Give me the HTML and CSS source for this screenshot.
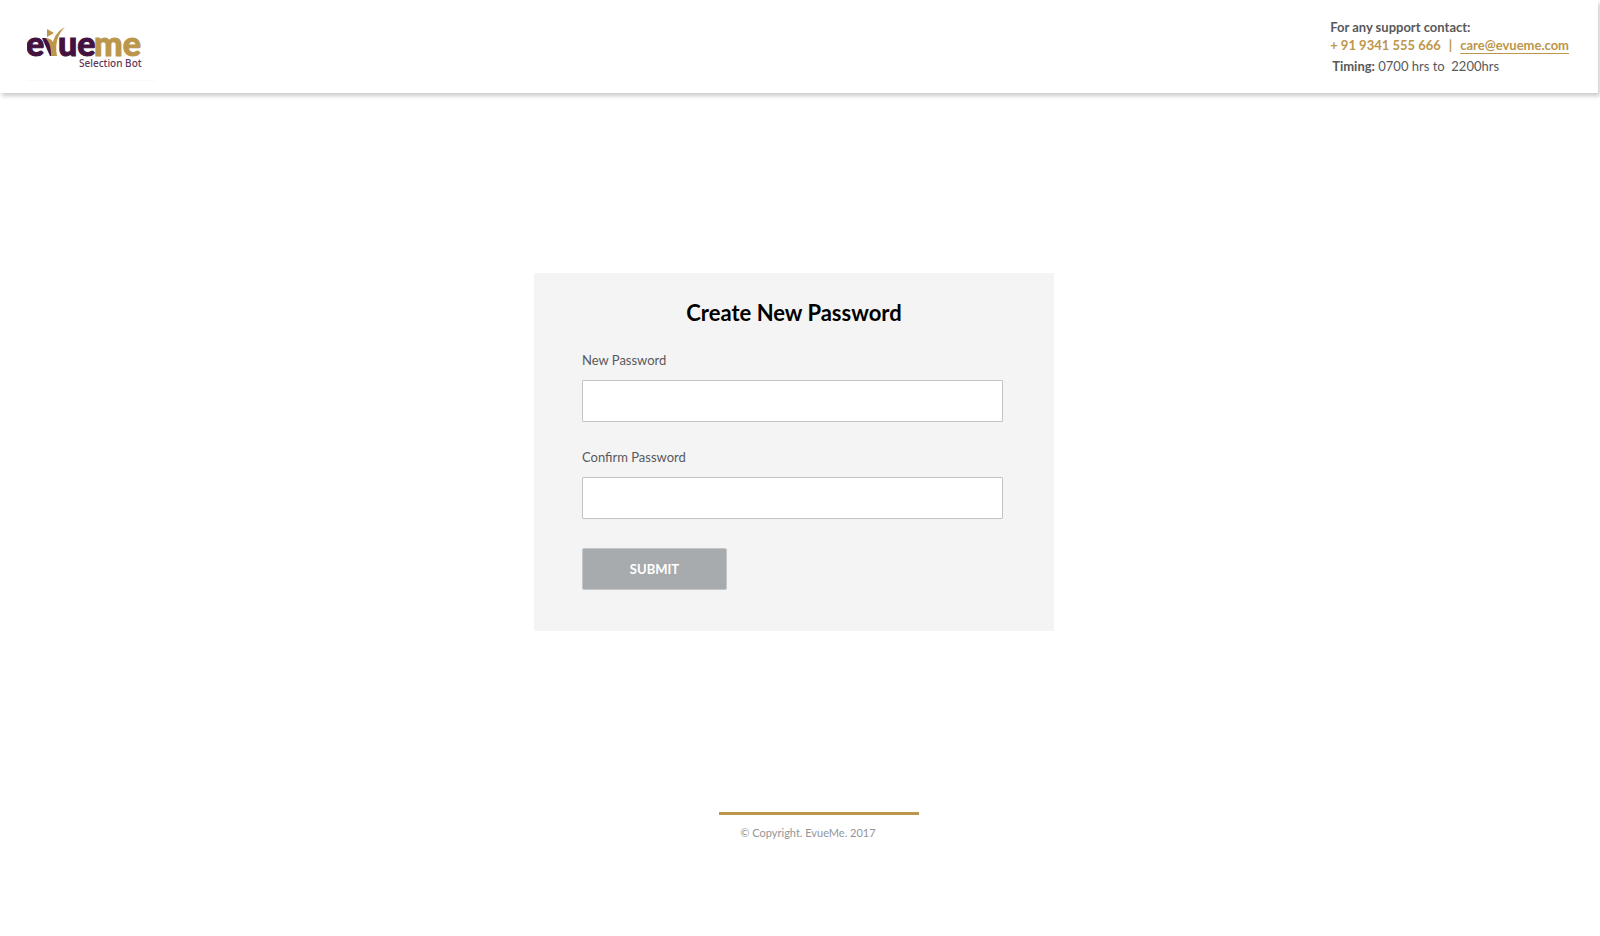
FILE: index.html
```html
<!DOCTYPE html>
<html lang="en">
<head>
<meta charset="utf-8">
<title>EvueMe - Create New Password</title>
<link rel="stylesheet" href="styles.css">
</head>
<body>
<header class="topbar">
  <a class="brand" href="#" aria-label="EvueMe Selection Bot">
    <svg class="logo" viewBox="0 0 128 56" role="img" aria-label="EvueMe Selection Bot">
      <g class="wordmark">
        <text class="plum" x="-1" y="32">e</text>
        <text class="plum" x="31" y="32">ue</text>
        <text class="gold" x="67" y="32">me</text>
      </g>
      <path class="plum" d="M15 14H20L25 23V32H23Z"/>
      <path class="gold" d="M20 5L27 9L20 13Z"/>
      <path class="gold" d="M38 3C31 7 28 11 26 18C24 15 22 14 18 14C22 17 24 22 24 32H30C28 20 30 11 38 3Z"/>
      <text class="tagline plum" x="52" y="43">Selection Bot</text>
    </svg>
  </a>
  <address class="support">
    <p class="support-title">For any support contact:</p>
    <p class="support-links"><a class="phone" href="tel:+919341555666">+ 91 9341 555 666</a><span>|</span><a class="mail" href="mailto:care@evueme.com">care@evueme.com</a></p>
    <p class="timing"><strong>Timing:</strong> 0700 hrs to&nbsp; 2200hrs</p>
  </address>
</header>
<main class="content">
  <form class="card">
    <h1 class="title">Create New Password</h1>
    <div class="field">
      <label for="new-password">New Password</label>
      <input id="new-password" type="password" autocomplete="new-password">
    </div>
    <div class="field">
      <label for="confirm-password">Confirm Password</label>
      <input id="confirm-password" type="password" autocomplete="new-password">
    </div>
    <button class="submit" type="button">SUBMIT</button>
  </form>
</main>
<footer class="footer">
  <hr class="rule">
  <p class="copyright">© Copyright. EvueMe. 2017</p>
</footer>
</body>
</html>
```
FILE: styles.css
```css
* { box-sizing: border-box; }
body {
  margin: 0;
  min-height: 100vh;
  display: flex;
  flex-direction: column;
  background: #fff;
  color: #58595b;
  font-family: Lato, "Noto Sans", sans-serif;
  font-size: 13px;
}
h1, p, hr { margin: 0; }
.topbar {
  display: flex;
  justify-content: space-between;
  align-items: flex-start;
  margin-right: 2px;
  padding: 18px 29px 12px 27px;
  box-shadow: 2px 3px 4px #ccc;
}
.brand { display: block; padding-top: 6px; border-bottom: 1px solid #f9f9f9; }
.logo { display: block; width: 128px; }
.plum { fill: #43123f; stroke: #43123f; stroke-width: 0; }
.gold { fill: #bc964a; stroke: #bc964a; stroke-width: 0; }
.wordmark { font-size: 34px; font-weight: 900; }
.wordmark text { stroke-width: 1px; }
.tagline { font-family: "Noto Sans", sans-serif; font-size: 10px; font-weight: 500; opacity: 0.85; }
.support { font-style: normal; line-height: 18px; }
.support-title { font-weight: 700; }
.support-links { display: flex; gap: 8px; color: #bc964a; font-weight: 700; }
.phone { color: inherit; text-decoration: none; }
.mail { color: inherit; text-decoration: underline; text-underline-offset: 3px; text-decoration-skip-ink: none; }
.timing { padding: 3px 0 0 2px; }
.content { padding: 180px 12px 0 0; }
.card {
  width: 100%;
  max-width: 520px;
  margin: 0 auto;
  padding: 26px 51px 41px 48px;
  background: #f4f4f4;
}
.title {
  padding-left: 3px;
  margin-bottom: 26px;
  color: #000;
  font-size: 22px;
  line-height: 28px;
  font-weight: 700;
  text-align: center;
}
.field { margin-bottom: 29px; }
.field label { display: block; margin-bottom: 13px; line-height: 14px; }
.field + .field { margin-top: -1px; }
.field input {
  display: block;
  width: 100%;
  height: 42px;
  padding: 0 12px;
  border: 1px solid #c3c4c5;
  border-radius: 1px;
  background: #fff;
  font: inherit;
}
.submit {
  display: block;
  width: 145px;
  height: 42px;
  border: 1px solid #c3c6c8;
  border-radius: 2px;
  background: #a7abad;
  color: #fff;
  font: inherit;
  font-weight: 700;
}
.footer { padding: 181px 0 0 38px; text-align: center; }
.rule { width: 200px; height: 3px; margin: 0 auto; border: 0; background: #bc964a; }
.copyright { padding: 9px 22px 0 0; color: #939598; font-size: 11px; line-height: 18px; }
```
